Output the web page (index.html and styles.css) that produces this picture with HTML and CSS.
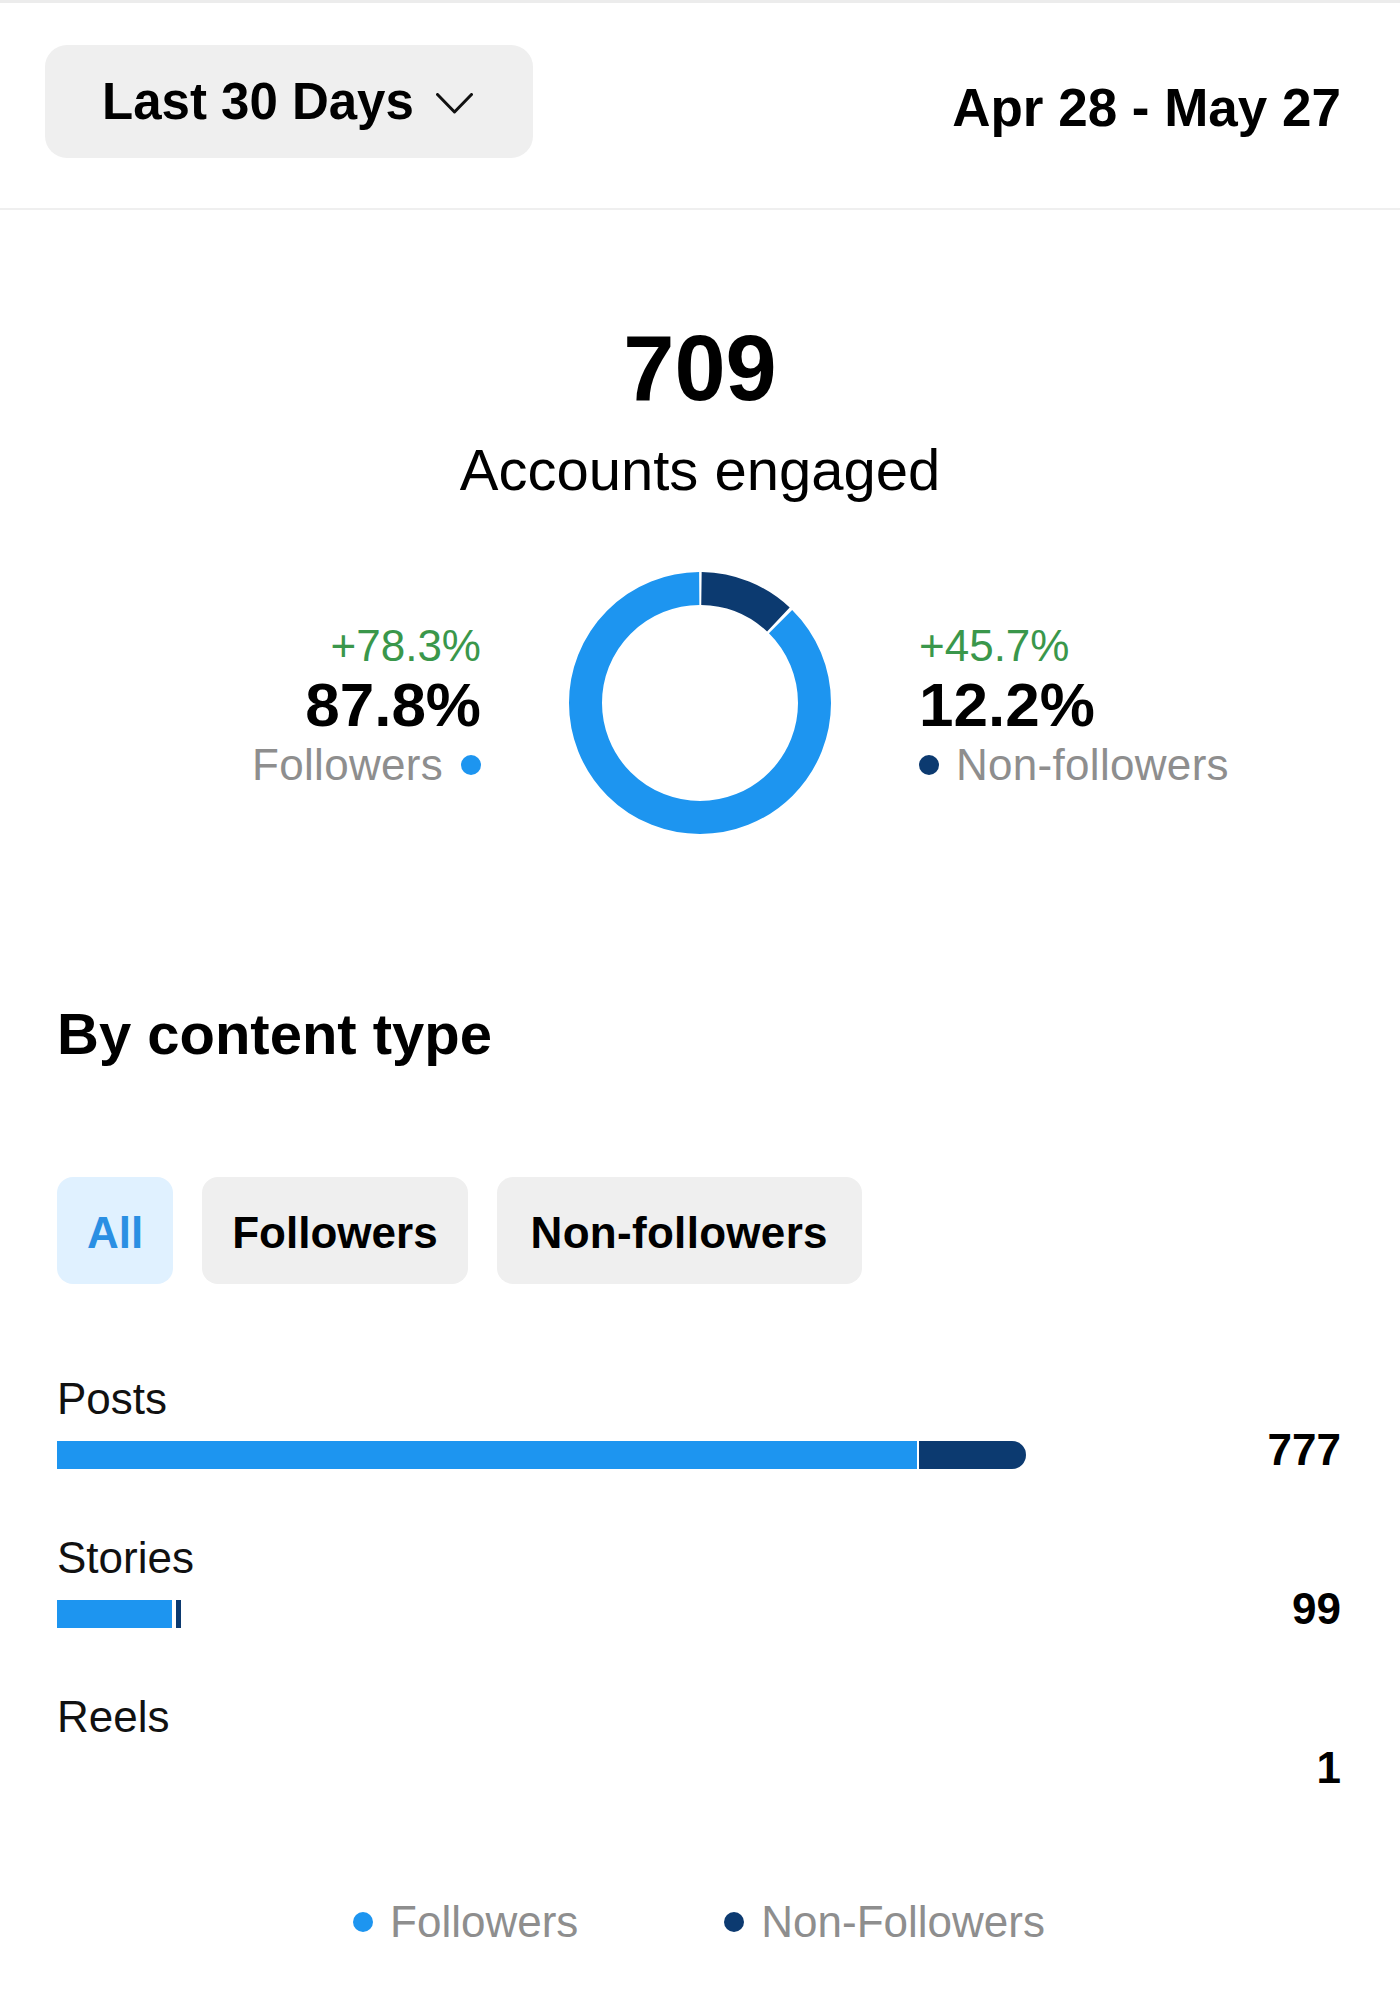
FILE: index.html
```html
<!DOCTYPE html>
<html lang="en">
<head>
<meta charset="utf-8">
<title>Accounts engaged</title>
<link rel="stylesheet" href="styles.css">
</head>
<body>
<div class="page">
  <header class="topbar">
    <button class="range" type="button">
      <span>Last 30 Days</span>
      <svg class="chev" width="37" height="21" viewBox="0 0 37 21" aria-hidden="true"><polyline points="1.5,1.5 18.5,19 35.5,1.5" fill="none" stroke="#111" stroke-width="3" stroke-linecap="round" stroke-linejoin="round"/></svg>
    </button>
    <div class="dates">Apr 28 - May 27</div>
  </header>

  <section class="summary">
    <div class="total">709</div>
    <div class="total-label">Accounts engaged</div>
    <div class="split">
      <div class="stat left">
        <div class="delta">+78.3%</div>
        <div class="pct">87.8%</div>
        <div class="name">Followers<span class="dot blue gap-l"></span></div>
      </div>
      <svg class="donut" width="262" height="262" viewBox="0 0 262 262" aria-hidden="true">
        <g transform="rotate(-90 131 131)">
          <circle cx="131" cy="131" r="114.5" fill="none" stroke="#0c3a70" stroke-width="33" stroke-dasharray="84.77 2000" stroke-dashoffset="-1.5"/>
          <circle cx="131" cy="131" r="114.5" fill="none" stroke="#1d95f0" stroke-width="33" stroke-dasharray="628.65 2000" stroke-dashoffset="-89.27"/>
        </g>
      </svg>
      <div class="stat right">
        <div class="delta">+45.7%</div>
        <div class="pct">12.2%</div>
        <div class="name"><span class="dot navy gap-r"></span>Non-followers</div>
      </div>
    </div>
  </section>

  <section class="content">
    <h2 class="title">By content type</h2>
    <div class="chips">
      <div class="chip active">All</div>
      <div class="chip">Followers</div>
      <div class="chip wide">Non-followers</div>
    </div>

    <div class="rows">
      <div class="row">
        <div class="label">Posts</div>
        <div class="barline">
          <div class="track">
            <div class="seg blue-seg" style="width:88.75%"></div>
            <div class="seg navy-seg end" style="width:11%;margin-left:2px"></div>
          </div>
          <div class="value">777</div>
        </div>
      </div>
      <div class="row">
        <div class="label">Stories</div>
        <div class="barline">
          <div class="track">
            <div class="seg blue-seg" style="width:11.87%"></div>
            <div class="seg navy-seg" style="width:0.52%;margin-left:4px"></div>
          </div>
          <div class="value">99</div>
        </div>
      </div>
      <div class="row">
        <div class="label">Reels</div>
        <div class="barline">
          <div class="track"></div>
          <div class="value">1</div>
        </div>
      </div>
    </div>

    <div class="legend">
      <div class="legend-item"><span class="dot blue"></span>Followers</div>
      <div class="legend-item"><span class="dot navy"></span>Non-Followers</div>
    </div>
  </section>
</div>
</body>
</html>
```

FILE: styles.css
```css
* { box-sizing: border-box; }

body {
  margin: 0;
  background: #ffffff;
  color: #000000;
  font-family: "Liberation Sans", Arial, sans-serif;
}

.page {
  width: 1400px;
  border-top: 3px solid #ececec;
}

/* Header */
.topbar {
  display: flex;
  align-items: center;
  justify-content: space-between;
  padding: 42px 59px 50px 45px;
  border-bottom: 2px solid #efefef;
}

.range {
  display: flex;
  align-items: center;
  gap: 22px;
  height: 113px;
  padding: 0 60px 0 57px;
  border: 0;
  border-radius: 22px;
  background: #efefef;
  color: #000;
  font-family: inherit;
  font-size: 51px;
  font-weight: 700;
  line-height: 1;
}

.chev { display: block; margin-top: 4px; }

.dates {
  font-size: 53px;
  font-weight: 700;
  line-height: 1;
  padding-top: 12px;
}

/* Summary */
.summary {
  padding-top: 112px;
  text-align: center;
}

.total {
  font-size: 92px;
  font-weight: 700;
  line-height: 92px;
}

.total-label {
  margin-top: 27px;
  font-size: 58px;
  line-height: 58px;
}

.split {
  margin-top: 73px;
  display: grid;
  grid-template-columns: 1fr 262px 1fr;
  column-gap: 88px;
  align-items: center;
}

.donut { display: block; }

.stat { padding-top: 6px; }
.stat.left { text-align: right; }
.stat.right { text-align: left; }

.delta {
  font-size: 44px;
  line-height: 52px;
  color: #3a974b;
}

.pct {
  font-size: 62px;
  font-weight: 700;
  line-height: 66px;
}

.name {
  font-size: 44px;
  line-height: 54px;
  color: #8e8e8e;
  letter-spacing: 0.3px;
}

.dot {
  display: inline-block;
  width: 20px;
  height: 20px;
  border-radius: 50%;
  vertical-align: middle;
  position: relative;
  top: -3px;
}
.dot.blue { background: #1d95f0; }
.dot.navy { background: #0c3a70; }
.gap-l { margin-left: 18px; }
.gap-r { margin-right: 17px; }

/* Content type */
.content {
  padding: 0 59px 0 57px;
}

.title {
  margin: 171px 0 0;
  font-size: 58px;
  font-weight: 700;
  line-height: 58px;
}

.chips {
  display: flex;
  gap: 29px;
  margin-top: 114px;
}

.chip {
  display: flex;
  align-items: center;
  height: 107px;
  padding: 4px 30px 0;
  border-radius: 16px;
  background: #efefef;
  font-size: 44px;
  font-weight: 700;
  line-height: 1;
}

.chip.wide { padding: 4px 34px 0; letter-spacing: 0.3px; }

.chip.active {
  background: #e0f1ff;
  color: #2a8fe3;
}

.rows { margin-top: 93px; }

.row + .row { margin-top: 67px; }

.label {
  font-size: 44px;
  line-height: 44px;
  color: #111;
}

.barline {
  display: flex;
  align-items: center;
  height: 28px;
  margin-top: 20px;
}

.track {
  flex: 1;
  display: flex;
  height: 28px;
}

.seg { height: 100%; }
.blue-seg { background: #1d95f0; }
.navy-seg { background: #0c3a70; }
.navy-seg.end { border-radius: 0 14px 14px 0; }

.value {
  width: 315px;
  margin-bottom: 10px;
  text-align: right;
  font-size: 44px;
  font-weight: 700;
  line-height: 44px;
}

/* Legend */
.legend {
  display: flex;
  justify-content: center;
  gap: 146px;
  margin-top: 113px;
  padding-bottom: 40px;
}

.legend-item {
  display: flex;
  align-items: center;
  gap: 17px;
  font-size: 44px;
  line-height: 44px;
  color: #8e8e8e;
}

.legend-item .dot { top: 0; }
```
